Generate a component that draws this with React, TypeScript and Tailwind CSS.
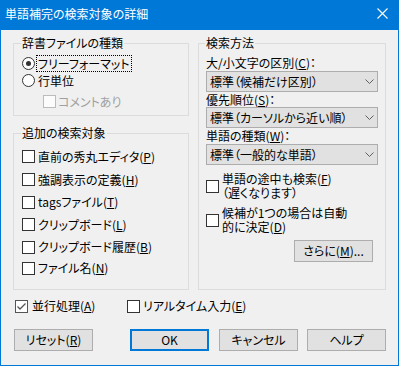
import React from 'react'

// mnemonic: "&X" underlines X
function Mn({ t }: { t: string }) {
  const i = t.indexOf('&')
  if (i < 0) return <>{t}</>
  return (
    <>
      {t.slice(0, i)}
      <span className="underline underline-offset-[1px]">{t[i + 1]}</span>
      {t.slice(i + 2)}
    </>
  )
}

function Box({ checked = false, disabled = false }: { checked?: boolean; disabled?: boolean }) {
  return (
    <span
      className={`relative flex items-center justify-center w-[13px] h-[13px] shrink-0 border ${
        disabled ? 'border-[#bcbcbc] bg-[#fcfcfc]' : checked ? 'border-[#555] bg-white' : 'border-[#333] bg-white'
      }`}
    >
      {checked && (
        <svg width="11" height="11" viewBox="0 0 11 11">
          <path d="M1.5 5.5 L4 8 L9.5 2.5" fill="none" stroke="#555" strokeWidth="1.3" />
        </svg>
      )}
    </span>
  )
}

function Radio({ checked = false }: { checked?: boolean }) {
  return (
    <span className="flex items-center justify-center w-[13px] h-[13px] shrink-0 rounded-full border border-[#333] bg-white">
      {checked && <span className="w-[5px] h-[5px] rounded-full bg-[#333]" />}
    </span>
  )
}

function Combo({ text }: { text: string }) {
  return (
    <div className="flex items-center justify-between h-[21px] border border-[#adadad] bg-[#e1e1e1] pl-[3px] pr-[3px]">
      <span>{text}</span>
      <svg width="9" height="5" viewBox="0 0 9 5">
        <path d="M0.5 0.5 L4.5 4.5 L8.5 0.5" fill="none" stroke="#606060" strokeWidth="1" />
      </svg>
    </div>
  )
}

function Btn({ children, primary = false, className = '' }: { children: React.ReactNode; primary?: boolean; className?: string }) {
  return (
    <div
      className={`flex items-center justify-center h-[22px] w-[79px] bg-[#e1e1e1] ${
        primary ? 'border-2 border-[#0078d7]' : 'border border-[#adadad]'
      } ${className}`}
    >
      {children}
    </div>
  )
}

const extraTargets = [
  { t: '直前の秀丸エディタ(&P)', h: 'h-[23px]' },
  { t: '強調表示の定義(&H)', h: 'h-[23px]' },
  { t: 'tagsファイル(&T)', h: 'h-[22px]' },
  { t: 'クリップボード(&L)', h: 'h-[23px]' },
  { t: 'クリップボード履歴(&B)', h: 'h-[22px]' },
  { t: 'ファイル名(&N)', h: 'h-[20px]' },
]

export default function App() {
  return (
    <div className="w-[399px] h-[366px] flex flex-col bg-[#f0f0f0] text-[12px] leading-[16px] text-black font-['Noto_Sans_CJK_JP','Noto_Sans',sans-serif] [font-feature-settings:'palt']">
      {/* Title bar */}
      <div className="h-[30px] shrink-0 bg-[#0078d7] flex justify-between text-white">
        <span className="pl-[5px] pt-[6px]">単語補完の検索対象の詳細</span>
        <svg className="mt-[8px] mr-[11px]" width="11" height="11" viewBox="0 0 11 11">
          <path d="M0.5 0.5 L10.5 10.5 M10.5 0.5 L0.5 10.5" stroke="#fff" strokeWidth="1.1" />
        </svg>
      </div>

      <div className="flex-1 border-x border-b border-[#0078d7] pl-[12px] pt-[5px]">
        <div className="flex gap-[9px]">
          {/* Left column */}
          <div className="w-[176px] flex flex-col">
            <fieldset className="border border-[#dcdcdc] pb-[5px]">
              <legend className="ml-[7px] px-[1px] h-[16px]">辞書ファイルの種類</legend>
              <div className="mt-[4px] h-[17px] pl-[8px] flex items-center">
                <Radio checked />
                <span className="ml-[2px] px-[1px] h-[15px] leading-[15px] outline outline-1 outline-dotted outline-black">
                  フリーフォーマット
                </span>
              </div>
              <div className="h-[17px] pl-[8px] flex items-center">
                <Radio />
                <span className="ml-[3px]">行単位</span>
              </div>
              <div className="mt-[4px] h-[17px] pl-[29px] flex items-center gap-[2px] text-[#a0a0a0]">
                <Box disabled />
                <span>コメントあり</span>
              </div>
            </fieldset>

            <fieldset className="mt-[9px] border border-[#dcdcdc] pb-[11px]">
              <legend className="ml-[7px] px-[1px] h-[16px]">追加の検索対象</legend>
              <div className="mt-[4px]">
                {extraTargets.map((r) => (
                  <div key={r.t} className={`${r.h} pl-[8px] flex items-center gap-[3px]`}>
                    <Box />
                    <span>
                      <Mn t={r.t} />
                    </span>
                  </div>
                ))}
              </div>
            </fieldset>
          </div>

          {/* Right column */}
          <fieldset className="w-[188px] border border-[#dcdcdc] px-[7px]">
            <legend className="ml-[-1px] px-[1px] h-[16px]">検索方法</legend>
            <div className="mt-[4px] h-[16px]">
              大/小文字の区別(<span className="underline underline-offset-[1px]">C</span>)：
            </div>
            <Combo text="標準（候補だけ区別）" />
            <div className="h-[15px] leading-[15px]">
              優先順位(<span className="underline underline-offset-[1px]">S</span>)：
            </div>
            <Combo text="標準（カーソルから近い順）" />
            <div className="h-[16px]">
              単語の種類(<span className="underline underline-offset-[1px]">W</span>)：
            </div>
            <Combo text="標準（一般的な単語）" />

            <div className="mt-[7px] flex items-center gap-[3px]">
              <Box />
              <span className="leading-[14px]">
                単語の途中も検索(<span className="underline underline-offset-[1px]">F</span>)
                <br />
                （遅くなります）
              </span>
            </div>
            <div className="mt-[6px] flex items-center gap-[3px]">
              <Box />
              <span className="leading-[14px]">
                候補が1つの場合は自動
                <br />
                的に決定(<span className="underline underline-offset-[1px]">D</span>)
              </span>
            </div>
            <div className="mt-[6px] flex justify-end pr-[5px]">
              <Btn className="w-[75px]">
                さらに(<span className="underline underline-offset-[1px]">M</span>)...
              </Btn>
            </div>
          </fieldset>
        </div>

        {/* Options row */}
        <div className="mt-[8px] h-[16px] pl-[2px] flex items-center">
          <div className="w-[112px] flex items-center gap-[4px]">
            <Box checked />
            <span>
              <Mn t="並行処理(&A)" />
            </span>
          </div>
          <div className="flex items-center gap-[3px]">
            <Box />
            <span>
              <Mn t="リアルタイム入力(&E)" />
            </span>
          </div>
        </div>

        {/* Buttons */}
        <div className="mt-[15px] flex">
          <Btn className="ml-[1px]">
            <Mn t="リセット(&R)" />
          </Btn>
          <Btn primary className="ml-[37px]">OK</Btn>
          <Btn className="ml-[10px]">キャンセル</Btn>
          <Btn className="ml-[9px]">ヘルプ</Btn>
        </div>
      </div>
    </div>
  )
}
